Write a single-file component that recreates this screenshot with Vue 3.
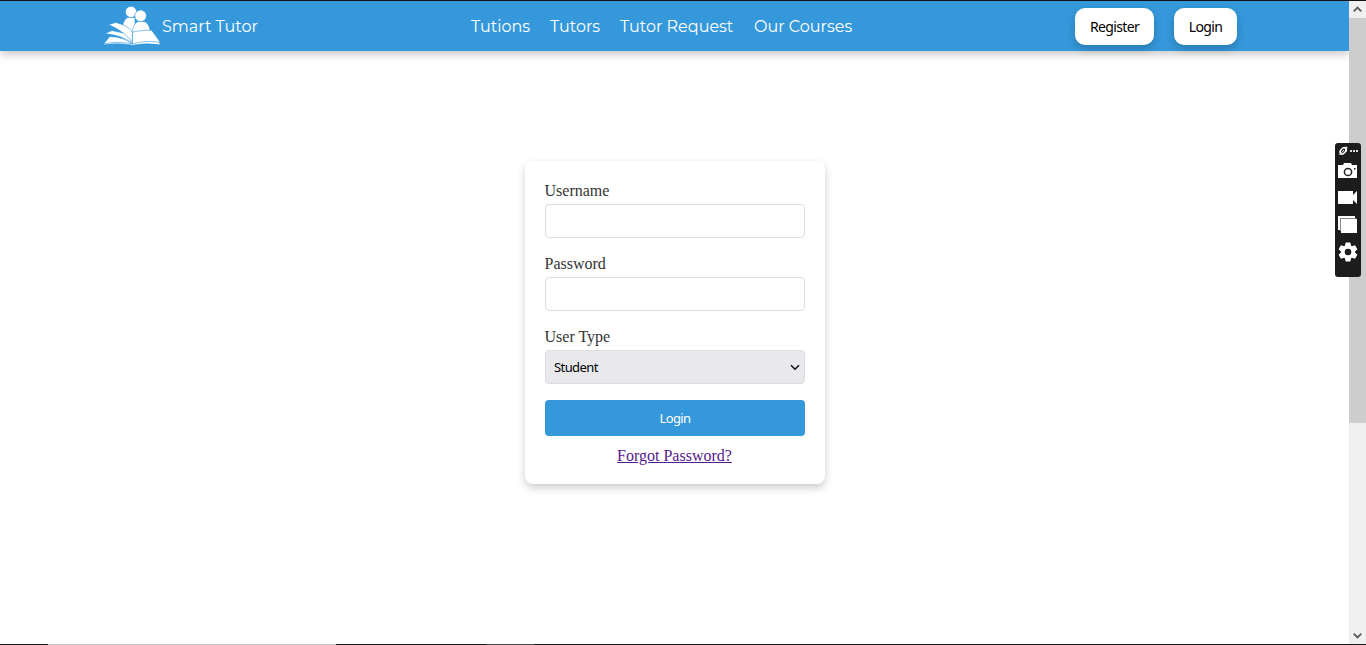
<script setup>
import { ref } from 'vue'

const links = [
  { label: 'Tutions', cls: 'tutions' },
  { label: 'Tutors', cls: 'tutors' },
  { label: 'Tutor Request', cls: 'request' },
  { label: 'Our Courses', cls: 'courses' },
]
const username = ref('')
const password = ref('')
</script>

<template>
  <div class="screen">
    <div class="page">
      <header class="bar">
        <div class="brand">
          <svg class="logo" width="58" height="40" viewBox="0 0 58 40">
            <g fill="#fff" stroke="#3498db" stroke-width="0.6">
              <path d="M19.5 20C21 14 23 11.5 26 11.5H32V28H20Z" />
              <circle cx="28" cy="5.9" r="5.6" />
              <path d="M29.3 25C31 18 33 15.5 36 15.5H41C45 16.5 46.5 21 47.3 25.5L30 30Z" />
              <circle cx="37.6" cy="9.8" r="5.8" />
              <path d="M0.3 38.8L6 31L29 33L51 29L57.7 38.8Q43 36.6 29.3 39.3Q16 36.6 0.3 38.8Z" />
              <path d="M29.3 38V26.3Q36 24.2 48.6 24.3L57.3 36.3Q42 34 29.3 38Z" />
              <path d="M1 37.6L7 30.5Q21 31 29.3 38Q17 35 1 37.6Z" />
              <path d="M2 27.6L9 24.6L29.3 29V37.3Q20 29.6 2 27.6Z" />
              <path d="M5.7 18.5L13 16.5Q26 20 29.3 26.3V36.5Q23 26.5 5.7 18.5Z" />
            </g>
          </svg>
          <span class="brand-name">Smart Tutor</span>
        </div>
        <nav class="links">
          <a v-for="l in links" :key="l.label" :class="l.cls">{{ l.label }}</a>
        </nav>
        <div class="actions">
          <button class="pill register">Register</button>
          <button class="pill login">Login</button>
        </div>
      </header>

      <main>
        <form class="card" @submit.prevent>
          <label for="user">Username</label>
          <input id="user" v-model="username" type="text" />
          <label for="pass">Password</label>
          <input id="pass" v-model="password" type="password" />
          <label>User Type</label>
          <div class="select">
            <span>Student</span>
            <svg width="10" height="7" viewBox="0 0 10 7"><path d="M1 1.2L5 5.2L9 1.2" fill="none" stroke="#111" stroke-width="1.5" /></svg>
          </div>
          <button class="submit"><span>Login</span></button>
          <a class="forgot">Forgot Password?</a>
        </form>
      </main>
    </div>

    <aside class="scroll">
      <div class="arrow"><svg width="9" height="7" viewBox="0 0 9 7"><path d="M.7 5.4L4.5 1.6L8.3 5.4" /></svg></div>
      <div class="thumb"></div>
      <div class="arrow down"><svg width="9" height="7" viewBox="0 0 9 7"><path d="M.7 1.6L4.5 5.4L8.3 1.6" /></svg></div>
    </aside>

    <div class="capture">
      <svg width="26" height="134" viewBox="0 0 26 134">
        <g fill="none" stroke="#fff">
          <ellipse cx="8" cy="8" rx="3.6" ry="2.3" transform="rotate(-50 8 8)" stroke-width="1.5" />
          <path d="M4.5 12L9 7M8 4.5L12 4.2L11 9" stroke-width="1" />
        </g>
        <path d="M15 7h2v2h-2zM18 7h2v2h-2zM21 7h2v2h-2z" fill="#ddd" />
        <path d="M3 22h5l1-2h7l1 2h5v13H3z" fill="#fff" />
        <circle cx="13" cy="29" r="3.6" fill="#fff" stroke="#222" stroke-width="1.5" />
        <path d="M19 25h1.5v1.5H19z" fill="#222" />
        <path d="M3 48h15v4l4-4v13l-4-4v4H3z" fill="#fff" />
        <path d="M3 73h17v2H5v12H3z" fill="#fff" />
        <path d="M5 75h16v1H6v12H5z" fill="#888" />
        <path d="M6 76h16v14H6z" fill="#fff" />
        <g transform="translate(13 109)" fill="#fff">
          <circle r="5.2" fill="none" stroke="#fff" stroke-width="3.8" />
          <path v-for="a in [0, 60, 120, 180, 240, 300]" :key="a" d="M-3.2 -6L-2.3 -9.5H2.3L3.2 -6Z" :transform="`rotate(${a})`" />
        </g>
      </svg>
    </div>
    <div class="edge"><i class="dark a"></i><i class="light"></i><i class="dark b"></i><i class="mid"></i><i class="dark c"></i></div>
  </div>
</template>

<style>
body { margin: 0; overflow: hidden; }
</style>

<style scoped>
.screen {
  position: relative;
  display: grid;
  grid-template-columns: 1349px 17px;
  grid-template-rows: 643px 1px;
  width: 1366px;
  height: 645px;
  box-sizing: border-box;
  border-top: 1px solid #111;
  background: #fff;
  overflow: hidden;
}
.page { overflow: hidden; }
.bar {
  display: flex;
  height: 50px;
  background: #3498db;
  box-shadow: 0 4px 8px rgba(0, 0, 0, 0.2);
  color: #fff;
}
.brand, .links {
  display: flex;
  flex: none;
  align-items: center;
  box-sizing: border-box;
  font: 16px Montserrat, Inter, sans-serif;
  white-space: nowrap;
}
.brand { width: 470px; padding-left: 103px; }
.logo { flex: none; margin-right: 1px; }
.links { gap: 20px; width: 604px; margin-left: 1px; }
.links .tutions { width: 59px; }
.links .tutors { width: 50px; }
.links .request { width: 114px; }
.actions { display: flex; align-items: center; gap: 20px; padding-top: 1px; }
.pill {
  height: 37px;
  padding: 0;
  border: 0;
  border-radius: 10px;
  background: #fff;
  box-shadow: 0 4px 8px rgba(0, 0, 0, 0.2);
  color: #000;
  font: 14px "Noto Sans", sans-serif;
  letter-spacing: -0.65px;
}
.register { width: 79px; }
.pill.login { width: 63px; }
main { display: flex; justify-content: center; padding-top: 110px; }
.card {
  display: flex;
  flex-direction: column;
  box-sizing: border-box;
  width: 300px;
  height: 323px;
  margin-left: 1px;
  padding: 20px 20px 19px;
  border-radius: 8px;
  background: #fff;
  box-shadow: 0 4px 8px rgba(0, 0, 0, 0.2);
  font: 16px/18px "Liberation Serif", serif;
}
.card > * { flex: none; }
label { height: 17px; margin: 1px 0 5px -0.5px; color: #333; }
input, .select {
  box-sizing: border-box;
  height: 34px;
  margin: 0 0 16px;
  border: 1px solid #ddd;
  border-radius: 4px;
  background: #fff;
}
.select {
  display: flex;
  align-items: center;
  justify-content: space-between;
  padding: 0 4px 0 8px;
  background: #e9e9ed;
  color: #000;
  font: 13px "Noto Sans", sans-serif;
  letter-spacing: -0.6px;
}
.submit {
  height: 36px;
  margin-bottom: 11px;
  padding: 0;
  border: 0;
  border-radius: 4px;
  background: #3498db;
  color: #fff;
  font: 13px "Noto Sans", sans-serif;
  letter-spacing: -0.6px;
}
.forgot { align-self: center; margin-right: 1px; color: #551a8b; text-decoration: underline; }
.scroll { display: flex; flex-direction: column; background: #f0f0f0; }
.arrow { display: flex; align-items: center; justify-content: center; height: 17px; }
.arrow path { fill: none; stroke: #606060; stroke-width: 2; }
.thumb { height: 405px; background: #cdcdcd; }
.down { margin-top: auto; }
.capture {
  position: absolute;
  left: 1335px;
  top: 142px;
  width: 26px;
  height: 134px;
  border-radius: 3px;
  background: #1c1c1c;
}
.capture svg { display: block; }
.edge { grid-column: 1 / 3; display: flex; }
.dark { background: #181818; }
.a { width: 48px; }
.light { width: 288px; background: #c2c2c2; }
.b { width: 150px; }
.mid { width: 48px; background: #484848; }
.c { flex: 1; }
</style>
